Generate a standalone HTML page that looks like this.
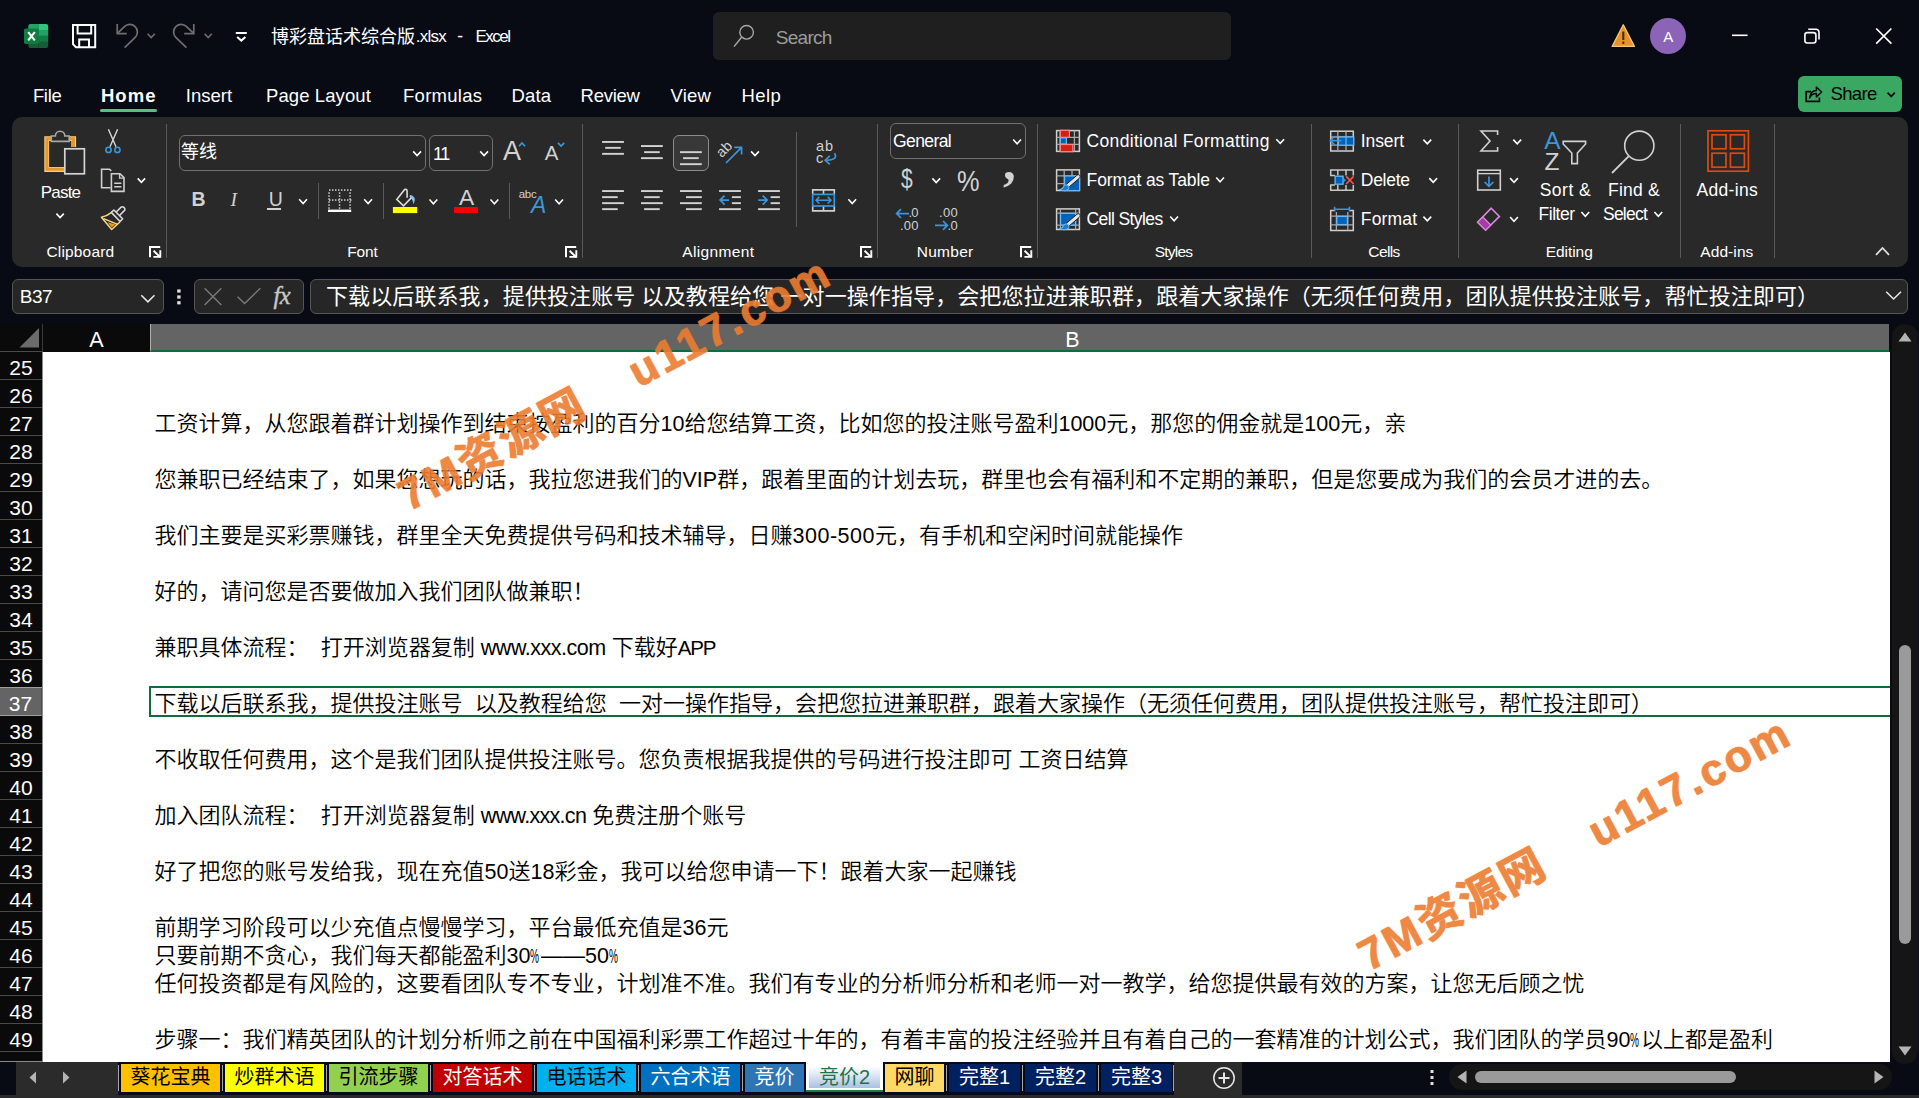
<!DOCTYPE html>
<html lang="zh-CN">
<head>
<meta charset="utf-8">
<title>博彩盘话术综合版.xlsx - Excel</title>
<style>
*{box-sizing:border-box;margin:0;padding:0}
html,body{width:1919px;height:1098px;overflow:hidden;background:#080b14}
body{font-family:"Liberation Sans","Noto Sans CJK SC",sans-serif;color:#fff;position:relative}
.abs{position:absolute}
.t{position:absolute;white-space:pre;line-height:1}
svg{position:absolute;overflow:visible}
/* ribbon */
#ribbon{left:12px;top:117px;width:1896px;height:150px;border-radius:10px;background:#292929}
/* formula bar */
.fbox{position:absolute;background:#262626;border:1px solid #555;border-radius:6px;top:279px;height:35px}
/* grid */
#grid{left:43px;top:352px;width:1847px;height:710px;background:#fff}
#rowhdr{left:0;top:352px;width:42px;height:710px;background:#0a0a0a;overflow:hidden}
.rh{position:absolute;left:0;width:42px;height:28px;border-bottom:1px solid #4a4a4a;font-size:21px;line-height:1;color:#fff;text-align:center;padding-top:5px}
.rh.sel{background:#646464;border-right:1.5px solid #0f6d3c;border-bottom-color:#a0a0a0;box-shadow:0 -1px 0 #a0a0a0}
.c{position:absolute;left:154.5px;font-size:22px;line-height:1;color:#000;white-space:pre;font-weight:350}
.c .l{font-size:21.5px}
.c .pc{display:inline-block;width:10.5px;font-size:21px;transform:scaleX(.48);transform-origin:0 50%}
/* sheet tabs */
.st{position:absolute;top:1064px;height:28px;font-size:20px;line-height:1;padding-top:3px;text-align:center;white-space:pre}
.wm{position:absolute;letter-spacing:2.8px;word-spacing:12px;-webkit-text-stroke:0.7px #ed7d31;white-space:pre;font-weight:700;font-size:44px;color:#ed7d31;line-height:1;transform-origin:0 100%;transform:rotate(-28.3deg);opacity:.9;text-shadow:0 0 1.5px #ed7d31}
</style>
</head>
<body>
<header id="titlebar">
<svg style="left:24px;top:23px" width="25" height="26" viewBox="0 0 25 26"><path d="M6.4 0.9H14.8V25H6.4A2 2 0 0 1 4.4 23V2.9A2 2 0 0 1 6.4 0.9Z" fill="#185c37"/><path d="M6.4 0.9H14.8V6.9H4.4V2.9A2 2 0 0 1 6.4 0.9Z" fill="#21a366"/><rect x="4.4" y="6.9" width="10.4" height="6" fill="#107c41"/><path d="M14.8 0.9H22.2A2 2 0 0 1 24.2 2.9V6.9H14.8Z" fill="#33c481"/><rect x="14.8" y="6.9" width="9.4" height="6" fill="#21a366"/><rect x="14.8" y="12.9" width="9.4" height="6" fill="#107c41"/><path d="M14.8 18.9H24.2V23A2 2 0 0 1 22.2 25H14.8Z" fill="#185c37"/><rect x="0" y="5.6" width="15" height="15.3" rx="1.6" fill="#107c41"/><path d="M4.2 9.2L10.8 17.4M10.8 9.2L4.2 17.4" stroke="#fff" stroke-width="2.1"/></svg>
<svg style="left:71px;top:23px" width="27" height="27" viewBox="0 0 27 27"><path d="M2 2H24.2V24.2H5L2 21.2Z" fill="none" stroke="#fff" stroke-width="2"/><path d="M6.6 2V10.4H20.2V2" fill="none" stroke="#fff" stroke-width="2"/><path d="M8.2 24V16.6H18V24" fill="none" stroke="#fff" stroke-width="2"/></svg>
<svg style="left:0;top:0" width="1" height="1"><path d="M117.2 24.1V33.6H126.8" fill="none" stroke="#6e6e6e" stroke-width="1.7"/><path d="M117.4 33.4L124.4 26.6A7.6 7.6 0 1 1 135.2 37.3L124.6 47.6" fill="none" stroke="#6e6e6e" stroke-width="1.7"/></svg>
<svg style="left:0;top:0" width="1" height="1"><path d="M147.6 33.8L151.2 37.6L154.9 33.8" fill="none" stroke="#6e6e6e" stroke-width="1.6"/></svg>
<svg style="left:0;top:0" width="1" height="1"><path d="M193.8 24.1V33.6H184.2" fill="none" stroke="#6e6e6e" stroke-width="1.7"/><path d="M193.6 33.4L186.6 26.6A7.6 7.6 0 1 0 175.8 37.3L186.4 47.6" fill="none" stroke="#6e6e6e" stroke-width="1.7"/></svg>
<svg style="left:0;top:0" width="1" height="1"><path d="M204.6 33.8L208.2 37.6L211.8 33.8" fill="none" stroke="#6e6e6e" stroke-width="1.6"/></svg>
<svg style="left:0;top:0" width="1" height="1"><rect x="235.8" y="32" width="11" height="2" fill="#fff"/><path d="M237.2 36.9L241.3 40.6L245.4 36.9" fill="none" stroke="#fff" stroke-width="2"/></svg>
<div class="t" style="left:271px;top:28px;font-size:18px;color:#fff">博彩盘话术综合版</div>
<div class="t" style="left:415.8px;top:28.3px;font-size:17px;color:#fff;letter-spacing:-0.75px;">.xlsx</div>
<div class="t" style="left:457.2px;top:27.9px;font-size:17.5px;color:#fff;letter-spacing:0.00px;">-</div>
<div class="t" style="left:475.4px;top:28.3px;font-size:17px;color:#fff;letter-spacing:-1.46px;">Excel</div>
<div class="abs" style="left:713px;top:12px;width:518px;height:48px;background:#1f1f1f;border-radius:6px"></div>
<svg style="left:0;top:0" width="1" height="1"><circle cx="746.6" cy="32.3" r="6.8" fill="none" stroke="#a6a6a6" stroke-width="1.4"/><path d="M741.6 37.3L734 46.6" stroke="#a6a6a6" stroke-width="1.5"/></svg>
<div class="t" style="left:775.8px;top:28.0px;font-size:19px;color:#9c9c9c;letter-spacing:-0.73px;">Search</div>
<svg style="left:1611px;top:23px" width="25" height="25" viewBox="0 0 25 25"><path d="M12.3 1.8L23.4 23.4H1.2Z" fill="#e8922a" stroke="#f4c87a" stroke-width="1.3" stroke-linejoin="round"/><rect x="11.3" y="8.6" width="2" height="8.4" fill="#3a2a10"/><rect x="11.3" y="18.6" width="2" height="2.2" fill="#3a2a10"/></svg>
<div class="abs" style="left:1650px;top:18px;width:36px;height:36px;border-radius:50%;background:#8b64b8"></div>
<div class="t" style="left:1663.2px;top:29.2px;font-size:15px;color:#fff;letter-spacing:0.00px;">A</div>
<svg style="left:0;top:0" width="1" height="1"><path d="M1732 35.3H1747.6" stroke="#fff" stroke-width="1.6"/><rect x="1804.9" y="32.6" width="11" height="10.4" rx="2.4" fill="none" stroke="#fff" stroke-width="1.6"/><path d="M1808.2 29.2H1816A3 3 0 0 1 1819 32.2V39.6" fill="none" stroke="#fff" stroke-width="1.6"/><path d="M1876.2 28.5L1891.4 43.6M1891.4 28.5L1876.2 43.6" stroke="#fff" stroke-width="1.7"/></svg>
</header>
<nav id="ribbon-tabs">
<div class="t" style="left:32.9px;top:87.0px;font-size:18.5px;color:#fff;letter-spacing:-0.32px;">File</div>
<div class="t" style="left:100.9px;top:87.0px;font-size:18.5px;color:#fff;letter-spacing:1.07px;font-weight:700;">Home</div>
<div class="t" style="left:185.7px;top:87.0px;font-size:18.5px;color:#fff;letter-spacing:0.05px;">Insert</div>
<div class="t" style="left:266.0px;top:87.0px;font-size:18.5px;color:#fff;letter-spacing:0.09px;">Page Layout</div>
<div class="t" style="left:403.0px;top:87.0px;font-size:18.5px;color:#fff;letter-spacing:0.27px;">Formulas</div>
<div class="t" style="left:511.6px;top:87.0px;font-size:18.5px;color:#fff;letter-spacing:0.16px;">Data</div>
<div class="t" style="left:580.6px;top:87.0px;font-size:18.5px;color:#fff;letter-spacing:-0.27px;">Review</div>
<div class="t" style="left:670.4px;top:87.0px;font-size:18.5px;color:#fff;letter-spacing:0.24px;">View</div>
<div class="t" style="left:741.6px;top:87.0px;font-size:18.5px;color:#fff;letter-spacing:0.40px;">Help</div>
<div class="abs" style="left:100px;top:108.8px;width:57px;height:3.2px;border-radius:2px;background:#4fc483"></div>
<div class="abs" style="left:1798px;top:76px;width:104px;height:36px;border-radius:6px;background:#3aa862"></div>
<svg style="left:0;top:0" width="1" height="1"><path d="M1811 91.6H1806.2V101.4H1819.4V97.6" fill="none" stroke="#0a0a0a" stroke-width="1.7"/><path d="M1809.6 98C1810.2 93 1812.6 90.4 1816.4 90.4V87L1821.6 92L1816.4 97V93.6C1813.4 93.4 1811.2 94.8 1809.6 98Z" fill="none" stroke="#0a0a0a" stroke-width="1.5" stroke-linejoin="round"/></svg>
<div class="t" style="left:1830.4px;top:85.4px;font-size:18.5px;color:#000;letter-spacing:-0.59px;">Share</div>
<svg style="left:0;top:0" width="1" height="1"><path d="M1887.6 92.6L1891.2 96.4L1894.8 92.6" fill="none" stroke="#0a0a0a" stroke-width="1.7"/></svg>
</nav>
<section id="ribbon-panel">
<div class="abs" id="ribbon"></div>
<div class="abs" style="left:166px;top:124px;width:1px;height:134px;background:#5a5a5a"></div>
<div class="abs" style="left:582px;top:124px;width:1px;height:134px;background:#5a5a5a"></div>
<div class="abs" style="left:877px;top:124px;width:1px;height:134px;background:#5a5a5a"></div>
<div class="abs" style="left:1037px;top:124px;width:1px;height:134px;background:#5a5a5a"></div>
<div class="abs" style="left:1311px;top:124px;width:1px;height:134px;background:#5a5a5a"></div>
<div class="abs" style="left:1458px;top:124px;width:1px;height:134px;background:#5a5a5a"></div>
<div class="abs" style="left:1680px;top:124px;width:1px;height:134px;background:#5a5a5a"></div>
<div class="abs" style="left:1774px;top:124px;width:1px;height:134px;background:#5a5a5a"></div>
<div class="t" style="left:46.4px;top:243.6px;font-size:15.5px;color:#fff;letter-spacing:0.18px;">Clipboard</div>
<div class="t" style="left:347.3px;top:243.6px;font-size:15.5px;color:#fff;letter-spacing:-0.20px;">Font</div>
<div class="t" style="left:682.3px;top:243.6px;font-size:15.5px;color:#fff;letter-spacing:0.35px;">Alignment</div>
<div class="t" style="left:916.7px;top:243.6px;font-size:15.5px;color:#fff;letter-spacing:0.29px;">Number</div>
<div class="t" style="left:1154.7px;top:244.4px;font-size:15.5px;color:#fff;letter-spacing:-0.77px;">Styles</div>
<div class="t" style="left:1368.3px;top:244.2px;font-size:15.5px;color:#fff;letter-spacing:-0.60px;">Cells</div>
<div class="t" style="left:1545.7px;top:244.2px;font-size:15.5px;color:#fff;letter-spacing:-0.05px;">Editing</div>
<div class="t" style="left:1700.3px;top:244.2px;font-size:15.5px;color:#fff;letter-spacing:0.08px;">Add-ins</div>
<svg style="left:149px;top:246px" width="13" height="12" viewBox="0 0 13 12"><path d="M1 11.2V1H11.2" fill="none" stroke="#fff" stroke-width="2"/><path d="M4.6 4.8L11 11" stroke="#fff" stroke-width="1.9"/><path d="M11.3 4.3V10.9H4.4" fill="none" stroke="#fff" stroke-width="1.9"/></svg>
<svg style="left:565px;top:246px" width="13" height="12" viewBox="0 0 13 12"><path d="M1 11.2V1H11.2" fill="none" stroke="#fff" stroke-width="2"/><path d="M4.6 4.8L11 11" stroke="#fff" stroke-width="1.9"/><path d="M11.3 4.3V10.9H4.4" fill="none" stroke="#fff" stroke-width="1.9"/></svg>
<svg style="left:860px;top:246px" width="13" height="12" viewBox="0 0 13 12"><path d="M1 11.2V1H11.2" fill="none" stroke="#fff" stroke-width="2"/><path d="M4.6 4.8L11 11" stroke="#fff" stroke-width="1.9"/><path d="M11.3 4.3V10.9H4.4" fill="none" stroke="#fff" stroke-width="1.9"/></svg>
<svg style="left:1020px;top:246px" width="13" height="12" viewBox="0 0 13 12"><path d="M1 11.2V1H11.2" fill="none" stroke="#fff" stroke-width="2"/><path d="M4.6 4.8L11 11" stroke="#fff" stroke-width="1.9"/><path d="M11.3 4.3V10.9H4.4" fill="none" stroke="#fff" stroke-width="1.9"/></svg>
<svg style="left:0;top:0" width="1" height="1"><path d="M1876 254.8L1882.5 248L1889 254.8" fill="none" stroke="#e0e0e0" stroke-width="1.8"/></svg>
<svg style="left:40px;top:126px" width="50" height="52" viewBox="0 0 50 52"><path d="M12 12.7H6.7V43.5H24" fill="none" stroke="#f7d27e" stroke-width="4.8"/><path d="M30 12.7H33.7V21" fill="none" stroke="#f7d27e" stroke-width="4.8"/><path d="M12 12.7H6.9V43.3H24" fill="none" stroke="#e8982a" stroke-width="3"/><path d="M30 12.7H33.5V21" fill="none" stroke="#e8982a" stroke-width="3"/><path d="M11.3 15.4V10H15.4A4.7 4.7 0 0 1 24.8 10H29.2V15.4Z" fill="#292929" stroke="#a8a8a8" stroke-width="1.6"/><rect x="24.8" y="22.8" width="19.6" height="25" fill="#292929" stroke="#d4d4d4" stroke-width="1.7"/></svg>
<div class="t" style="left:40.8px;top:184.2px;font-size:17px;color:#fff;letter-spacing:-0.82px;">Paste</div>
<svg style="left:0;top:0" width="1" height="1"><path d="M56.4 213.6L60.1 217.6L63.8 213.6" fill="none" stroke="#fff" stroke-width="1.6"/></svg>
<svg style="left:0;top:0" width="1" height="1"><path d="M108.4 129.2L116 146.8M117.6 129.2L110 146.8" fill="none" stroke="#d8d8d8" stroke-width="1.4"/><circle cx="108.5" cy="149.9" r="2.6" fill="none" stroke="#3a96dd" stroke-width="1.6"/><circle cx="117.4" cy="149.9" r="2.6" fill="none" stroke="#3a96dd" stroke-width="1.6"/></svg>
<svg style="left:100px;top:167px" width="26" height="26" viewBox="0 0 26 26"><path d="M10.5 20.7H1.6V2.2H9.5L11.3 4" fill="none" stroke="#d0d0d0" stroke-width="1.6"/><path d="M11.4 6.7H20L24 10.7V24.4H11.4Z" fill="#292929" stroke="#d0d0d0" stroke-width="1.6"/><path d="M19.6 7V11.2H23.8" fill="none" stroke="#d0d0d0" stroke-width="1.3"/><path d="M14.2 16.2H21.4M14.2 19.8H21.4" stroke="#d0d0d0" stroke-width="1.5"/></svg>
<svg style="left:0;top:0" width="1" height="1"><path d="M137.7 178.4L141.4 182.4L145.1 178.4" fill="none" stroke="#fff" stroke-width="1.6"/></svg>
<svg style="left:0;top:0" width="1" height="1"><path d="M111.2 212.6Q106.4 216.4 101.4 217.3L111.7 229.5L119.9 222" fill="none" stroke="#f7d982" stroke-width="1.5" stroke-linejoin="round"/><path d="M103.6 218.6L117.6 224.3" stroke="#f7d982" stroke-width="1.4"/><path d="M107.6 222.2L115.6 224.6L111.6 227.4Z" fill="#e8961e"/><path d="M111.3 212.4L113.9 210L122.6 218.8L120.1 221.5Z" fill="none" stroke="#dadada" stroke-width="1.6" stroke-linejoin="round"/><path d="M116 212.3L121.1 207.2A2.5 2.5 0 0 1 124.8 210L119.5 215.5" fill="none" stroke="#dadada" stroke-width="1.6"/></svg>
<div class="abs" style="left:179px;top:135px;width:247px;height:36px;border:1px solid #707070;border-radius:6px"></div>
<div class="t" style="left:181px;top:142.5px;font-size:18px;color:#fff">等线</div>
<svg style="left:0;top:0" width="1" height="1"><path d="M413.2 151.4L417.1 155.6L421.0 151.4" fill="none" stroke="#fff" stroke-width="1.6"/></svg>
<div class="abs" style="left:429px;top:135px;width:64px;height:36px;border:1px solid #707070;border-radius:6px"></div>
<div class="t" style="left:433px;top:144.8px;font-size:18px;color:#fff;letter-spacing:-1.5px">11</div>
<svg style="left:0;top:0" width="1" height="1"><path d="M480.2 151.4L484.1 155.6L488.0 151.4" fill="none" stroke="#fff" stroke-width="1.6"/></svg>
<div class="t" style="left:503.1px;top:137.7px;font-size:27px;color:#d2d2d2;letter-spacing:0.00px;">A</div>
<svg style="left:0;top:0" width="1" height="1"><path d="M519 146.3L522 143L525 146.3" fill="none" stroke="#3a96dd" stroke-width="1.7"/></svg>
<div class="t" style="left:544.8px;top:143.2px;font-size:20.5px;color:#d2d2d2;letter-spacing:0.00px;">A</div>
<svg style="left:0;top:0" width="1" height="1"><path d="M558 142.8L561.1 146.1L564.2 142.8" fill="none" stroke="#3a96dd" stroke-width="1.7"/></svg>
<div class="t" style="left:191.5px;top:189.8px;font-size:19.5px;color:#d2d2d2;letter-spacing:0.00px;font-weight:700;">B</div>
<div class="t" style="left:230.5px;top:189.6px;font-size:19.5px;color:#d2d2d2;font-family:'Liberation Serif',serif;font-style:italic">I</div>
<div class="t" style="left:268.8px;top:189.9px;font-size:19.5px;color:#d2d2d2;letter-spacing:0.00px;">U</div>
<div class="abs" style="left:267px;top:208.3px;width:14px;height:1.6px;background:#d2d2d2"></div>
<svg style="left:0;top:0" width="1" height="1"><path d="M299.2 199.3L303.1 203.5L307.0 199.3" fill="none" stroke="#fff" stroke-width="1.6"/></svg>
<div class="abs" style="left:318px;top:183px;width:1px;height:36px;background:#5a5a5a"></div>
<svg style="left:328px;top:189px" width="24" height="24" viewBox="0 0 24 24"><rect x="1.0" y="0.3" width="1.5" height="1.5" fill="#d2d2d2"/><rect x="1.0" y="10.3" width="1.5" height="1.5" fill="#d2d2d2"/><rect x="4.0" y="0.3" width="1.5" height="1.5" fill="#d2d2d2"/><rect x="4.0" y="10.3" width="1.5" height="1.5" fill="#d2d2d2"/><rect x="7.0" y="0.3" width="1.5" height="1.5" fill="#d2d2d2"/><rect x="7.0" y="10.3" width="1.5" height="1.5" fill="#d2d2d2"/><rect x="10.0" y="0.3" width="1.5" height="1.5" fill="#d2d2d2"/><rect x="10.0" y="10.3" width="1.5" height="1.5" fill="#d2d2d2"/><rect x="13.0" y="0.3" width="1.5" height="1.5" fill="#d2d2d2"/><rect x="13.0" y="10.3" width="1.5" height="1.5" fill="#d2d2d2"/><rect x="16.0" y="0.3" width="1.5" height="1.5" fill="#d2d2d2"/><rect x="16.0" y="10.3" width="1.5" height="1.5" fill="#d2d2d2"/><rect x="19.0" y="0.3" width="1.5" height="1.5" fill="#d2d2d2"/><rect x="19.0" y="10.3" width="1.5" height="1.5" fill="#d2d2d2"/><rect x="22.0" y="0.3" width="1.5" height="1.5" fill="#d2d2d2"/><rect x="22.0" y="10.3" width="1.5" height="1.5" fill="#d2d2d2"/><rect x="0.3" y="3.3" width="1.5" height="1.5" fill="#d2d2d2"/><rect x="10.8" y="3.3" width="1.5" height="1.5" fill="#d2d2d2"/><rect x="21.3" y="3.3" width="1.5" height="1.5" fill="#d2d2d2"/><rect x="0.3" y="6.3" width="1.5" height="1.5" fill="#d2d2d2"/><rect x="10.8" y="6.3" width="1.5" height="1.5" fill="#d2d2d2"/><rect x="21.3" y="6.3" width="1.5" height="1.5" fill="#d2d2d2"/><rect x="0.3" y="9.3" width="1.5" height="1.5" fill="#d2d2d2"/><rect x="10.8" y="9.3" width="1.5" height="1.5" fill="#d2d2d2"/><rect x="21.3" y="9.3" width="1.5" height="1.5" fill="#d2d2d2"/><rect x="0.3" y="12.3" width="1.5" height="1.5" fill="#d2d2d2"/><rect x="10.8" y="12.3" width="1.5" height="1.5" fill="#d2d2d2"/><rect x="21.3" y="12.3" width="1.5" height="1.5" fill="#d2d2d2"/><rect x="0.3" y="15.3" width="1.5" height="1.5" fill="#d2d2d2"/><rect x="10.8" y="15.3" width="1.5" height="1.5" fill="#d2d2d2"/><rect x="21.3" y="15.3" width="1.5" height="1.5" fill="#d2d2d2"/><rect x="0.3" y="18.3" width="1.5" height="1.5" fill="#d2d2d2"/><rect x="10.8" y="18.3" width="1.5" height="1.5" fill="#d2d2d2"/><rect x="21.3" y="18.3" width="1.5" height="1.5" fill="#d2d2d2"/><rect x="0" y="20.6" width="23.2" height="2.4" fill="#fff"/></svg>
<svg style="left:0;top:0" width="1" height="1"><path d="M364.2 199.3L368.1 203.5L372.0 199.3" fill="none" stroke="#fff" stroke-width="1.6"/></svg>
<div class="abs" style="left:383px;top:183px;width:1px;height:36px;background:#5a5a5a"></div>
<svg style="left:0;top:0" width="1" height="1"><path d="M407.1 197.7V191A1.65 1.65 0 0 0 404 190.2L396.8 199.4L403.5 205.8L411.5 197.6L410 195.8" fill="none" stroke="#dadada" stroke-width="1.6" stroke-linejoin="miter"/><path d="M409.6 195.2C413 194.8 415.4 197.6 414.7 200.4C414.4 201.8 414 203 413.5 204.3C413 201.6 412.2 199.4 410.8 197.6Z" fill="#86c4f4"/><rect x="392.9" y="207" width="24.3" height="6.1" fill="#ffff00"/></svg>
<svg style="left:0;top:0" width="1" height="1"><path d="M429.5 199.5L433.4 203.7L437.3 199.5" fill="none" stroke="#fff" stroke-width="1.6"/></svg>
<div class="t" style="left:459.1px;top:186.3px;font-size:22.8px;color:#d2d2d2;letter-spacing:0.00px;">A</div>
<div class="abs" style="left:454px;top:207.1px;width:24.2px;height:6px;background:#ff0000"></div>
<svg style="left:0;top:0" width="1" height="1"><path d="M490.5 199.5L494.4 203.7L498.3 199.5" fill="none" stroke="#fff" stroke-width="1.6"/></svg>
<div class="abs" style="left:509px;top:183px;width:1px;height:36px;background:#5a5a5a"></div>
<div class="t" style="left:518.8px;top:189.1px;font-size:11.5px;color:#d2d2d2;letter-spacing:-0.35px;">abc</div>
<div class="t" style="left:531px;top:193.9px;font-size:23px;color:#3a96dd;font-style:italic">A</div>
<svg style="left:0;top:0" width="1" height="1"><path d="M555.2 199.5L559.1 203.7L563.0 199.5" fill="none" stroke="#fff" stroke-width="1.6"/></svg><svg style="left:0;top:0" width="1" height="1"><rect x="602.1" y="141.0" width="21.8" height="1.9" fill="#d2d2d2"/><rect x="605.2" y="146.9" width="15.5" height="1.9" fill="#d2d2d2"/><rect x="602.1" y="152.9" width="21.8" height="1.9" fill="#d2d2d2"/></svg>
<svg style="left:0;top:0" width="1" height="1"><rect x="641.0" y="145.1" width="21.8" height="1.9" fill="#d2d2d2"/><rect x="644.1" y="151.2" width="15.6" height="1.9" fill="#d2d2d2"/><rect x="641.0" y="157.2" width="21.8" height="1.9" fill="#d2d2d2"/></svg>
<div class="abs" style="left:673px;top:135px;width:36px;height:36px;background:#383838;border:1px solid #8c8c8c;border-radius:6px"></div>
<svg style="left:0;top:0" width="1" height="1"><rect x="680.0" y="151.2" width="21.8" height="1.9" fill="#d2d2d2"/><rect x="683.1" y="157.2" width="15.6" height="1.9" fill="#d2d2d2"/><rect x="680.0" y="163.2" width="21.8" height="1.9" fill="#d2d2d2"/></svg>
<div class="t" style="left:716px;top:142px;font-size:14.5px;color:#d2d2d2;transform:rotate(-45deg);transform-origin:50% 50%">ab</div>
<svg style="left:0;top:0" width="1" height="1"><path d="M726 163L741.3 147.6M734.3 147.3H741.6V154.6" fill="none" stroke="#3a96dd" stroke-width="1.7"/></svg>
<svg style="left:0;top:0" width="1" height="1"><path d="M751.1 151.4L755.0 155.6L758.9 151.4" fill="none" stroke="#fff" stroke-width="1.6"/></svg>
<div class="abs" style="left:796px;top:132px;width:1px;height:95px;background:#5a5a5a"></div>
<svg style="left:0;top:0" width="1" height="1"><rect x="602.1" y="190.1" width="21.8" height="1.9" fill="#d2d2d2"/><rect x="602.1" y="196.2" width="15.6" height="1.9" fill="#d2d2d2"/><rect x="602.1" y="202.2" width="21.8" height="1.9" fill="#d2d2d2"/><rect x="602.1" y="208.2" width="15.6" height="1.9" fill="#d2d2d2"/></svg>
<svg style="left:0;top:0" width="1" height="1"><rect x="641.0" y="190.1" width="21.8" height="1.9" fill="#d2d2d2"/><rect x="644.1" y="196.2" width="15.6" height="1.9" fill="#d2d2d2"/><rect x="641.0" y="202.2" width="21.8" height="1.9" fill="#d2d2d2"/><rect x="644.1" y="208.2" width="15.6" height="1.9" fill="#d2d2d2"/></svg>
<svg style="left:0;top:0" width="1" height="1"><rect x="680.0" y="190.1" width="21.8" height="1.9" fill="#d2d2d2"/><rect x="686.0" y="196.2" width="15.8" height="1.9" fill="#d2d2d2"/><rect x="680.0" y="202.2" width="21.8" height="1.9" fill="#d2d2d2"/><rect x="686.0" y="208.2" width="15.8" height="1.9" fill="#d2d2d2"/></svg>
<svg style="left:0;top:0" width="1" height="1"><rect x="719.1" y="190.1" width="21.8" height="1.9" fill="#d2d2d2"/><rect x="731.9" y="196.2" width="9.0" height="1.9" fill="#d2d2d2"/><rect x="731.9" y="202.2" width="9.0" height="1.9" fill="#d2d2d2"/><rect x="719.1" y="208.2" width="21.8" height="1.9" fill="#d2d2d2"/></svg>
<svg style="left:0;top:0" width="1" height="1"><path d="M720.3 200.1H729M724.6 195.6L720.1 200.1L724.6 204.6" fill="none" stroke="#3a96dd" stroke-width="1.7"/></svg>
<svg style="left:0;top:0" width="1" height="1"><rect x="758.1" y="190.1" width="21.8" height="1.9" fill="#d2d2d2"/><rect x="770.6" y="196.2" width="9.3" height="1.9" fill="#d2d2d2"/><rect x="770.6" y="202.2" width="9.3" height="1.9" fill="#d2d2d2"/><rect x="758.1" y="208.2" width="21.8" height="1.9" fill="#d2d2d2"/></svg>
<svg style="left:0;top:0" width="1" height="1"><path d="M758.3 200.1H767M762.7 195.6L767.2 200.1L762.7 204.6" fill="none" stroke="#3a96dd" stroke-width="1.7"/></svg>
<div class="t" style="left:815.9px;top:139.0px;font-size:14.5px;color:#d2d2d2;letter-spacing:0.98px;">ab</div>
<div class="t" style="left:815.9px;top:150.9px;font-size:14.5px;color:#d2d2d2;letter-spacing:0.00px;">c</div>
<svg style="left:0;top:0" width="1" height="1"><path d="M834.5 153.3C837.5 157.8 833.5 160.6 825.5 160.2M829.8 155.8L825.2 160.2L829.8 164.4" fill="none" stroke="#3a96dd" stroke-width="1.7"/></svg>
<svg style="left:811px;top:188px" width="26" height="26" viewBox="0 0 26 26"><path d="M1.7 6V1.9H23.3V6M1.7 18V22.9H23.3V18M12.5 2V6M12.5 18V23" fill="none" stroke="#d0d0d0" stroke-width="1.6"/><rect x="1.7" y="6.4" width="21.6" height="11.6" fill="none" stroke="#3a96dd" stroke-width="1.7"/><path d="M5 12.2H20M8.3 8.9L5 12.2L8.3 15.5M16.7 8.9L20 12.2L16.7 15.5" fill="none" stroke="#3a96dd" stroke-width="1.5"/></svg>
<svg style="left:0;top:0" width="1" height="1"><path d="M848.4 199.3L852.2 203.5L856.1 199.3" fill="none" stroke="#fff" stroke-width="1.6"/></svg>
<div class="abs" style="left:890px;top:123px;width:136px;height:36px;border:1px solid #707070;border-radius:6px"></div>
<div class="t" style="left:893.1px;top:132.9px;font-size:17.5px;color:#fff;letter-spacing:-0.62px;">General</div>
<svg style="left:0;top:0" width="1" height="1"><path d="M1013.2 139.5L1017.1 143.7L1021.0 139.5" fill="none" stroke="#fff" stroke-width="1.6"/></svg>
<div class="t" style="left:900.6px;top:166.2px;font-size:27px;color:#d2d2d2;transform:scaleX(.78);transform-origin:0 0">$</div>
<svg style="left:0;top:0" width="1" height="1"><path d="M932.4 178.4L936.2 182.6L940.1 178.4" fill="none" stroke="#fff" stroke-width="1.6"/></svg>
<div class="t" style="left:956.6px;top:166px;font-size:29.5px;color:#d2d2d2;transform:scaleX(.86);transform-origin:0 0">%</div>
<div class="t" style="left:1003px;top:137.3px;font-size:51px;color:#d2d2d2;font-family:'Liberation Serif',serif;font-weight:700">,</div>
<div class="t" style="left:908.5px;top:206.2px;font-size:13px;color:#d2d2d2;letter-spacing:-0.77px;">.0</div>
<div class="t" style="left:899.9px;top:218.6px;font-size:13px;color:#d2d2d2;letter-spacing:0.29px;">.00</div>
<svg style="left:0;top:0" width="1" height="1"><path d="M896.6 213.6H909M901 209.2L896.6 213.6L901 218" fill="none" stroke="#3a96dd" stroke-width="1.7"/></svg>
<div class="t" style="left:939.0px;top:206.2px;font-size:13px;color:#d2d2d2;letter-spacing:0.34px;">.00</div>
<div class="t" style="left:947.6px;top:218.6px;font-size:13px;color:#d2d2d2;letter-spacing:-0.68px;">.0</div>
<svg style="left:0;top:0" width="1" height="1"><path d="M935 225.4H947.4M943 221L947.4 225.4L943 229.8" fill="none" stroke="#3a96dd" stroke-width="1.7"/></svg><svg style="left:1055px;top:129px" width="26" height="24" viewBox="0 0 26 24"><rect x="1.6" y="1.6" width="22.8" height="20.8" fill="none" stroke="#d0d0d0" stroke-width="1.5"/><path d="M1.6 8.3H24.4M1.6 15.4H24.4M5 1.6V22.4M19.4 1.6V22.4" fill="none" stroke="#a8a8a8" stroke-width="1.3"/><rect x="5.4" y="1.3" width="9" height="7" fill="#d42010" stroke="#ff8088" stroke-width="1.2"/><rect x="5.4" y="8.9" width="6" height="6" fill="#0062b8" stroke="#6cb8f0" stroke-width="1.2"/><rect x="5.4" y="15.5" width="12.4" height="7.2" fill="#d42010" stroke="#ff8088" stroke-width="1.2"/></svg>
<div class="t" style="left:1086.6px;top:132.9px;font-size:17.5px;color:#fff;letter-spacing:0.32px;">Conditional Formatting</div>
<svg style="left:0;top:0" width="1" height="1"><path d="M1276.3 139.2L1280.2 143.4L1284.1 139.2" fill="none" stroke="#fff" stroke-width="1.6"/></svg>
<svg style="left:1055px;top:168px" width="28" height="26" viewBox="0 0 28 26"><rect x="1.6" y="1.9" width="22.8" height="20.6" fill="none" stroke="#d0d0d0" stroke-width="1.5"/><path d="M1.6 7.8H24.4M1.6 15.6H24.4M9.2 1.9V22.5M17 1.9V22.5" fill="none" stroke="#a8a8a8" stroke-width="1.3"/><rect x="9.6" y="8" width="15" height="14.6" fill="#0062b8" stroke="#6cb8f0" stroke-width="1.2"/><path d="M24.6 7.2C25.6 8.2 25.2 9.4 24 10.5L13.4 19.6L10.8 16.8L21.6 7.6C22.8 6.6 23.8 6.4 24.6 7.2Z" fill="#e4e4e4" stroke="#1e1e1e" stroke-width="1"/><path d="M10.6 17C12.6 16.6 14.4 18.2 13.9 20.2C13.2 22.8 9.2 23.4 4.6 21.8C7 21 8.2 20 8.6 18.6C8.9 17.6 9.6 17.2 10.6 17Z" fill="#1f78c8" stroke="#6cb8f0" stroke-width="1.1"/></svg>
<div class="t" style="left:1086.6px;top:172.0px;font-size:17.5px;color:#fff;letter-spacing:-0.13px;">Format as Table</div>
<svg style="left:0;top:0" width="1" height="1"><path d="M1216.2 177.5L1220.1 181.7L1224.0 177.5" fill="none" stroke="#fff" stroke-width="1.6"/></svg>
<svg style="left:1055px;top:207px" width="28" height="26" viewBox="0 0 28 26"><rect x="1.6" y="1.9" width="22.8" height="20.6" fill="none" stroke="#d0d0d0" stroke-width="1.5"/><path d="M1.6 6.2H24.4M1.6 18.2H24.4M5.4 1.9V22.5M20.6 1.9V22.5" fill="none" stroke="#a8a8a8" stroke-width="1.3"/><rect x="5.6" y="6.4" width="15" height="11.6" fill="#0062b8" stroke="#6cb8f0" stroke-width="1.2"/><path d="M24.6 7.2C25.6 8.2 25.2 9.4 24 10.5L13.4 19.6L10.8 16.8L21.6 7.6C22.8 6.6 23.8 6.4 24.6 7.2Z" fill="#e4e4e4" stroke="#1e1e1e" stroke-width="1"/><path d="M10.6 17C12.6 16.6 14.4 18.2 13.9 20.2C13.2 22.8 9.2 23.4 4.6 21.8C7 21 8.2 20 8.6 18.6C8.9 17.6 9.6 17.2 10.6 17Z" fill="#1f78c8" stroke="#6cb8f0" stroke-width="1.1"/></svg>
<div class="t" style="left:1086.6px;top:210.7px;font-size:17.5px;color:#fff;letter-spacing:-0.61px;">Cell Styles</div>
<svg style="left:0;top:0" width="1" height="1"><path d="M1170.2 216.5L1174.1 220.7L1178.0 216.5" fill="none" stroke="#fff" stroke-width="1.6"/></svg>
<svg style="left:1329px;top:129px" width="27" height="24" viewBox="0 0 27 24"><rect x="1.7" y="2.2" width="22.6" height="19.8" fill="none" stroke="#d0d0d0" stroke-width="1.5"/><path d="M1.7 8H24.3M1.7 16.2H24.3M8.8 2.2V22M17 2.2V22" fill="none" stroke="#a8a8a8" stroke-width="1.3"/><rect x="9.4" y="8" width="15.4" height="8.2" fill="#0062b8" stroke="#6cb8f0" stroke-width="1.2"/><path d="M17 8V16.2" stroke="#6cb8f0" stroke-width="1.2"/><path d="M1.4 11.7H12.4M5.8 7.2L1.3 11.7L5.8 16.2" fill="none" stroke="#3a96dd" stroke-width="1.7"/></svg>
<div class="t" style="left:1360.8px;top:133.2px;font-size:17.5px;color:#fff;letter-spacing:-0.09px;">Insert</div>
<svg style="left:0;top:0" width="1" height="1"><path d="M1423.4 139.6L1427.3 143.8L1431.2 139.6" fill="none" stroke="#fff" stroke-width="1.6"/></svg>
<svg style="left:1329px;top:168px" width="27" height="24" viewBox="0 0 27 24"><path d="M1.7 7.4V1.9H24.3V7.4M1.7 16.9V22.3H24.3V16.9M8.8 1.9V7.4M17 1.9V7.4M8.8 16.9V22.3M17 16.9V22.3M1 7.4H6M1 16.9H6" fill="none" stroke="#c8c8c8" stroke-width="1.5"/><rect x="6.1" y="8.2" width="8" height="8" fill="#0062b8" stroke="#6cb8f0" stroke-width="1.3"/><path d="M14.9 10.3L17 12.2L14.9 14.1Z" fill="#3a96dd"/><path d="M17.2 8.4L24.6 16M24.6 8.4L17.2 16" fill="none" stroke="#f05454" stroke-width="1.7"/></svg>
<div class="t" style="left:1360.8px;top:172.2px;font-size:17.5px;color:#fff;letter-spacing:-0.28px;">Delete</div>
<svg style="left:0;top:0" width="1" height="1"><path d="M1429.3 178.1L1433.2 182.3L1437.1 178.1" fill="none" stroke="#fff" stroke-width="1.6"/></svg>
<svg style="left:1329px;top:206px" width="27" height="26" viewBox="0 0 27 26"><path d="M5.6 4.6H1.7V24.4H24.3V4.6H20.4" fill="none" stroke="#d0d0d0" stroke-width="1.5"/><path d="M1.7 10.2H24.3M1.7 18.8H24.3M7.4 6V24.4M18.8 6V24.4" fill="none" stroke="#a8a8a8" stroke-width="1.3"/><rect x="7.8" y="10.4" width="10.6" height="8.2" fill="#0062b8" stroke="#6cb8f0" stroke-width="1.3"/><path d="M5.6 3.2H20.4M5.6 0.8V5.6M20.4 0.8V5.6" fill="none" stroke="#3a96dd" stroke-width="1.6"/></svg>
<div class="t" style="left:1360.8px;top:211.1px;font-size:17.5px;color:#fff;letter-spacing:0.18px;">Format</div>
<svg style="left:0;top:0" width="1" height="1"><path d="M1423.4 216.6L1427.3 220.8L1431.2 216.6" fill="none" stroke="#fff" stroke-width="1.6"/></svg>
<svg style="left:0;top:0" width="1" height="1"><path d="M1497.6 135V131H1481L1490 141L1481 151H1497.6V147" fill="none" stroke="#d2d2d2" stroke-width="1.6"/></svg>
<svg style="left:0;top:0" width="1" height="1"><path d="M1513.3 139.6L1517.2 143.8L1521.1 139.6" fill="none" stroke="#fff" stroke-width="1.6"/></svg>
<svg style="left:1476px;top:168px" width="27" height="24" viewBox="0 0 27 24"><rect x="1.7" y="2.2" width="22.6" height="19.8" fill="none" stroke="#d0d0d0" stroke-width="1.6"/><path d="M1.7 5.6H24.3" stroke="#d0d0d0" stroke-width="1.4"/><path d="M13 8.4V18.4M8.6 14L13 18.4L17.4 14" fill="none" stroke="#3a96dd" stroke-width="1.7"/></svg>
<svg style="left:0;top:0" width="1" height="1"><path d="M1510.1 178.1L1514.0 182.3L1517.9 178.1" fill="none" stroke="#fff" stroke-width="1.6"/></svg>
<svg style="left:1476px;top:206px" width="27" height="26" viewBox="0 0 27 26"><path d="M15.2 2.2L23.4 10.4L9.6 24.2L1.6 16.2Z" fill="none" stroke="#d78bd8" stroke-width="1.6"/><path d="M6.8 11L14.8 19L9.6 24.2L1.6 16.2Z" fill="#a63aa8" stroke="#d78bd8" stroke-width="1.2"/></svg>
<svg style="left:0;top:0" width="1" height="1"><path d="M1510.1 217.0L1514.0 221.2L1517.9 217.0" fill="none" stroke="#fff" stroke-width="1.6"/></svg>
<div class="t" style="left:1544.2px;top:128.7px;font-size:24.5px;color:#3a96dd;letter-spacing:0.00px;">A</div>
<div class="t" style="left:1544.4px;top:150.1px;font-size:24.5px;color:#d2d2d2;letter-spacing:0.00px;">Z</div>
<svg style="left:0;top:0" width="1" height="1"><path d="M1563.2 141.4H1585.6V144L1577.4 153V163.6H1571.8V153L1563.2 144Z" fill="none" stroke="#d2d2d2" stroke-width="1.6"/></svg>
<div class="t" style="left:1539.7px;top:182.1px;font-size:17.5px;color:#fff;letter-spacing:0.49px;">Sort &amp;</div>
<div class="t" style="left:1538.6px;top:206.0px;font-size:17.5px;color:#fff;letter-spacing:-0.49px;">Filter</div>
<svg style="left:0;top:0" width="1" height="1"><path d="M1581.4 212.0L1585.3 216.2L1589.2 212.0" fill="none" stroke="#fff" stroke-width="1.6"/></svg>
<svg style="left:0;top:0" width="1" height="1"><circle cx="1639.3" cy="145.7" r="14.6" fill="none" stroke="#d2d2d2" stroke-width="1.6"/><path d="M1628.8 156.2L1612 173" stroke="#d2d2d2" stroke-width="1.8"/></svg>
<div class="t" style="left:1608.0px;top:182.1px;font-size:17.5px;color:#fff;letter-spacing:0.23px;">Find &amp;</div>
<div class="t" style="left:1603.0px;top:206.0px;font-size:17.5px;color:#fff;letter-spacing:-0.77px;">Select</div>
<svg style="left:0;top:0" width="1" height="1"><path d="M1654.4 212.0L1658.3 216.2L1662.2 212.0" fill="none" stroke="#fff" stroke-width="1.6"/></svg>
<svg style="left:1706px;top:129px" width="44" height="44" viewBox="0 0 44 44"><rect x="2" y="1.8" width="40.4" height="40.4" fill="none" stroke="#dc4a12" stroke-width="1.7"/><rect x="6" y="5.8" width="14" height="14" fill="none" stroke="#dc4a12" stroke-width="1.7"/><rect x="24.4" y="5.8" width="14" height="14" fill="none" stroke="#dc4a12" stroke-width="1.7"/><rect x="6" y="24.2" width="14" height="14" fill="none" stroke="#dc4a12" stroke-width="1.7"/><rect x="24.4" y="24.2" width="14" height="14" fill="none" stroke="#dc4a12" stroke-width="1.7"/></svg>
<div class="t" style="left:1696.4px;top:182.1px;font-size:17.5px;color:#fff;letter-spacing:0.34px;">Add-ins</div>
</section>
<section id="formula-bar">
<div class="fbox" style="left:12px;width:152px"></div>
<div class="t" style="left:19.8px;top:287.4px;font-size:19px;color:#fff;letter-spacing:-0.52px;">B37</div>
<svg style="left:0;top:0" width="1" height="1"><path d="M141.3 295.2L147.9 301.8L154.5 295.2" fill="none" stroke="#e6e6e6" stroke-width="1.6"/><rect x="177.2" y="289.4" width="3.4" height="3.2" fill="#e0e0e0"/><rect x="177.2" y="295.4" width="3.4" height="3.2" fill="#e0e0e0"/><rect x="177.2" y="301.2" width="3.4" height="3.2" fill="#e0e0e0"/></svg>
<div class="fbox" style="left:194px;width:110px"></div>
<svg style="left:0;top:0" width="1" height="1"><path d="M204.6 288.3L221.3 305M221.3 288.3L204.6 305" stroke="#7a7a7a" stroke-width="1.4"/><path d="M237.6 296.8L244.6 303.6L260.3 288.2" fill="none" stroke="#7a7a7a" stroke-width="1.4"/></svg>
<div class="t" style="left:273.5px;top:284px;font-size:24.5px;color:#c8c8c8;font-family:'Liberation Serif',serif;font-style:italic;letter-spacing:-0.5px;-webkit-text-stroke:0.4px #c8c8c8">fx</div>
<div class="fbox" style="left:310px;width:1598px"></div>
<div class="t" id="ftxt" style="left:326px;top:286px;font-size:22px;color:#fff;letter-spacing:0.1px">下载以后联系我，提供投注账号 以及教程给您 一对一操作指导，会把您拉进兼职群，跟着大家操作（无须任何费用，团队提供投注账号，帮忙投注即可）</div>
<svg style="left:0;top:0" width="1" height="1"><path d="M1886.2 291.8L1893.6 299L1901 291.8" fill="none" stroke="#e6e6e6" stroke-width="1.6"/></svg>
</section>
<main id="sheet">
<div class="abs" id="grid"></div>
<div class="abs" style="left:0;top:324px;width:1889px;height:28px;background:#0a0a0a"></div>
<svg style="left:19px;top:327px" width="21" height="21" viewBox="0 0 21 21"><path d="M20 1V20.5H0.5Z" fill="#6b6b6b"/></svg>
<div class="abs" style="left:42px;top:324px;width:1px;height:27px;background:#3a3a3a"></div>
<div class="t" style="left:43px;width:107px;text-align:center;top:330px;font-size:21.5px;color:#fff">A</div>
<div class="abs" style="left:150px;top:324px;width:1739px;height:28px;background:#646464;border-left:1px solid #b0b0b0;border-bottom:2px solid #0f6d3c"></div>
<div class="t" style="left:1062.5px;width:20px;text-align:center;top:330px;font-size:21.5px;color:#fff">B</div>
<div class="abs" style="left:0;top:351px;width:43px;height:1px;background:#4a4a4a"></div>
<div class="abs" style="left:42px;top:352px;width:1px;height:710px;background:#8c8c8c"></div>
<div class="abs" id="rowhdr">
<div class="rh" style="top:0px">25</div>
<div class="rh" style="top:28px">26</div>
<div class="rh" style="top:56px">27</div>
<div class="rh" style="top:84px">28</div>
<div class="rh" style="top:112px">29</div>
<div class="rh" style="top:140px">30</div>
<div class="rh" style="top:168px">31</div>
<div class="rh" style="top:196px">32</div>
<div class="rh" style="top:224px">33</div>
<div class="rh" style="top:252px">34</div>
<div class="rh" style="top:280px">35</div>
<div class="rh" style="top:308px">36</div>
<div class="rh sel" style="top:336px">37</div>
<div class="rh" style="top:364px">38</div>
<div class="rh" style="top:392px">39</div>
<div class="rh" style="top:420px">40</div>
<div class="rh" style="top:448px">41</div>
<div class="rh" style="top:476px">42</div>
<div class="rh" style="top:504px">43</div>
<div class="rh" style="top:532px">44</div>
<div class="rh" style="top:560px">45</div>
<div class="rh" style="top:588px">46</div>
<div class="rh" style="top:616px">47</div>
<div class="rh" style="top:644px">48</div>
<div class="rh" style="top:672px">49</div>
<div class="rh" style="top:700px">50</div>
</div>
<div class="c" id="r27" style="top:413px">工资计算，从您跟着群计划操作到结束按盈利的百分<span class="l">10</span>给您结算工资，比如您的投注账号盈利<span class="l">1000</span>元，那您的佣金就是<span class="l">100</span>元，亲</div>
<div class="c" id="r29" style="top:469px">您兼职已经结束了，如果您想玩的话，我拉您进我们的<span class="l">VIP</span>群，跟着里面的计划去玩，群里也会有福利和不定期的兼职，但是您要成为我们的会员才进的去。</div>
<div class="c" id="r31" style="top:525px">我们主要是买彩票赚钱，群里全天免费提供号码和技术辅导，日赚<span class="l" style="letter-spacing:0.5px">300-500</span>元，有手机和空闲时间就能操作</div>
<div class="c" id="r33" style="top:581px">好的，请问您是否要做加入我们团队做兼职！</div>
<div class="c" id="r35" style="top:637px">兼职具体流程：  打开浏览器复制 <span class="l" style="letter-spacing:-0.5px">www.xxx.com</span> 下载好<span class="l" style="letter-spacing:-1.1px;font-size:20.5px">APP</span></div>
<div class="c" id="r37" style="top:693px">下载以后联系我，提供投注账号  以及教程给您  一对一操作指导，会把您拉进兼职群，跟着大家操作（无须任何费用，团队提供投注账号，帮忙投注即可）</div>
<div class="c" id="r39" style="top:749px">不收取任何费用，这个是我们团队提供投注账号。您负责根据我提供的号码进行投注即可 工资日结算</div>
<div class="c" id="r41" style="top:805px">加入团队流程：  打开浏览器复制 <span class="l" style="letter-spacing:-0.7px">www.xxx.cn</span> 免费注册个账号</div>
<div class="c" id="r43" style="top:861px">好了把您的账号发给我，现在充值<span class="l">50</span>送<span class="l">18</span>彩金，我可以给您申请一下！跟着大家一起赚钱</div>
<div class="c" id="r45" style="top:917px">前期学习阶段可以少充值点慢慢学习，平台最低充值是<span class="l">36</span>元</div>
<div class="c" id="r46" style="top:945px">只要前期不贪心，我们每天都能盈利<span class="l">30</span><span class="pc">%</span>——<span class="l">50</span><span class="pc">%</span></div>
<div class="c" id="r47" style="top:973px">任何投资都是有风险的，这要看团队专不专业，计划准不准。我们有专业的分析师分析和老师一对一教学，给您提供最有效的方案，让您无后顾之忧</div>
<div class="c" id="r49" style="top:1029px">步骤一：我们精英团队的计划分析师之前在中国福利彩票工作超过十年的，有着丰富的投注经验并且有着自己的一套精准的计划公式，我们团队的学员<span class="l">90</span><span class="pc">%</span>以上都是盈利</div>
<div class="abs" style="left:149px;top:686px;width:1741px;height:31px;border:2px solid #0f6d3c;border-right:none"></div>
</main>
<footer id="sheet-tabs">
<div class="abs" style="left:0;top:1061px;width:42px;height:1px;background:#8a8a8a"></div>
<div class="abs" style="left:0;top:1062px;width:1919px;height:33px;background:#080b14"></div>
<div class="abs" style="left:16px;top:1062px;width:102px;height:33px;background:#2b2b2b"></div>
<div class="abs" style="left:118px;top:1062px;width:1056px;height:33px;background:#060a1c"></div>
<div class="abs" style="left:1174px;top:1062px;width:68px;height:33px;background:#2b2b2b"></div>
<div class="abs" style="left:0;top:1095px;width:1919px;height:3px;background:#2a2a2a"></div>
<svg style="left:29px;top:1071px" width="8" height="13" viewBox="0 0 8 13"><path d="M7 0.5V12.5L0.5 6.5Z" fill="#b4b4b4"/></svg>
<svg style="left:62px;top:1071px" width="8" height="13" viewBox="0 0 8 13"><path d="M1 0.5V12.5L7.5 6.5Z" fill="#b4b4b4"/></svg>
<div class="abs" style="left:118px;top:1065px;width:1px;height:26px;background:#a8a8a8"></div>
<div class="abs" style="left:222px;top:1065px;width:1px;height:26px;background:#a8a8a8"></div>
<div class="abs" style="left:326px;top:1065px;width:1px;height:26px;background:#a8a8a8"></div>
<div class="abs" style="left:430px;top:1065px;width:1px;height:26px;background:#a8a8a8"></div>
<div class="abs" style="left:534px;top:1065px;width:1px;height:26px;background:#a8a8a8"></div>
<div class="abs" style="left:638px;top:1065px;width:1px;height:26px;background:#a8a8a8"></div>
<div class="abs" style="left:742px;top:1065px;width:1px;height:26px;background:#a8a8a8"></div>
<div class="abs" style="left:946px;top:1065px;width:1px;height:26px;background:#a8a8a8"></div>
<div class="abs" style="left:1022px;top:1065px;width:1px;height:26px;background:#a8a8a8"></div>
<div class="abs" style="left:1098px;top:1065px;width:1px;height:26px;background:#a8a8a8"></div>
<div class="abs" style="left:1173px;top:1065px;width:1px;height:26px;background:#a8a8a8"></div>
<div class="st" style="left:121px;width:99px;background:#ffc000;color:#000">葵花宝典</div>
<div class="st" style="left:225px;width:99px;background:#ffff00;color:#000">炒群术语</div>
<div class="st" style="left:329px;width:99px;background:#92d050;color:#000">引流步骤</div>
<div class="st" style="left:433px;width:99px;background:#c00000;color:#fff">对答话术</div>
<div class="st" style="left:537px;width:99px;background:#00b0f0;color:#000">电话话术</div>
<div class="st" style="left:641px;width:99px;background:#0070c0;color:#fff">六合术语</div>
<div class="st" style="left:745px;width:59px;background:#2e75b6;color:#fff">竞价</div>
<div class="st" style="left:885px;width:59px;background:#ffd966;color:#000">网聊</div>
<div class="st" style="left:949px;width:71px;background:#002060;color:#fff">完整1</div>
<div class="st" style="left:1025px;width:71px;background:#002060;color:#fff">完整2</div>
<div class="st" style="left:1101px;width:71px;background:#002060;color:#fff">完整3</div>
<div class="abs" style="left:806px;top:1061px;width:77px;height:31px;background:#fff;border-bottom:2px solid #1a7a43"></div>
<div class="abs" style="left:809px;top:1064px;width:71px;height:24px;background:linear-gradient(#fff 10%,#a9c1e2 100%)"></div>
<div class="st" style="left:806px;width:77px;color:#217346">竞价2</div>
<svg style="left:1213px;top:1067px" width="22" height="22" viewBox="0 0 22 22"><circle cx="11" cy="11" r="10.2" fill="none" stroke="#e8e8e8" stroke-width="1.5"/><path d="M11 5.5V16.5M5.5 11H16.5" stroke="#e8e8e8" stroke-width="2"/></svg>
<svg style="left:1429px;top:1069px" width="6" height="18" viewBox="0 0 6 18"><rect x="1.5" y="1" width="3" height="3" fill="#e0e0e0"/><rect x="1.5" y="7" width="3" height="3" fill="#e0e0e0"/><rect x="1.5" y="13" width="3" height="3" fill="#e0e0e0"/></svg>
<div class="abs" style="left:1449px;top:1064px;width:443px;height:26px;border-radius:13px;background:#151515"></div>
<div class="abs" style="left:1475px;top:1071px;width:261px;height:12px;border-radius:6px;background:#9a9a9a"></div>
<svg style="left:1457px;top:1070px" width="10" height="14" viewBox="0 0 10 14"><path d="M9.5 0.5V13.5L0.5 7Z" fill="#b4b4b4"/></svg>
<svg style="left:1874px;top:1070px" width="10" height="14" viewBox="0 0 10 14"><path d="M0.5 0.5V13.5L9.5 7Z" fill="#b4b4b4"/></svg>
<div class="abs" style="left:1890px;top:318px;width:29px;height:746px;background:#080b14"></div>
<div class="abs" style="left:1892px;top:324px;width:26px;height:740px;border-radius:13px;background:#151515"></div>
<div class="abs" style="left:1899px;top:645px;width:12px;height:299px;border-radius:6px;background:#9a9a9a"></div>
<svg style="left:1898px;top:332px" width="14" height="10" viewBox="0 0 14 10"><path d="M0.5 9.5H13.5L7 0.5Z" fill="#b4b4b4"/></svg>
<svg style="left:1898px;top:1046px" width="14" height="10" viewBox="0 0 14 10"><path d="M0.5 0.5H13.5L7 9.5Z" fill="#b4b4b4"/></svg>
</footer>
<aside id="watermarks">
<div class="wm" id="wm2" style="left:1371.8px;top:934.3px">7M资源网  u117.com</div>
<div class="wm" id="wm1" style="left:411.8px;top:474.3px">7M资源网  u117.com</div>
</aside>
</body>
</html>
